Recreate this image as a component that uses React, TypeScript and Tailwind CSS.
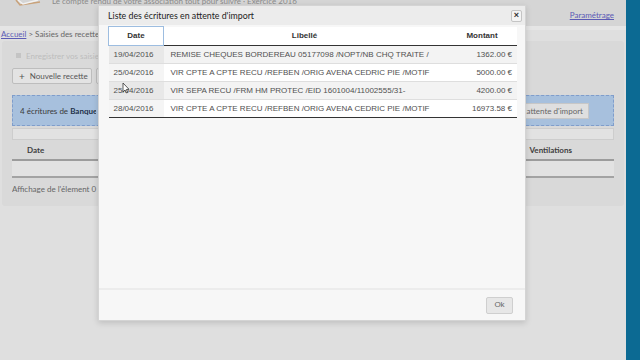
const rows = [
  { date: "19/04/2016", label: "REMISE CHEQUES BORDEREAU 05177098 /NOPT/NB CHQ TRAITE /", amount: "1362.00 €" },
  { date: "25/04/2016", label: "VIR CPTE A CPTE RECU /REFBEN /ORIG AVENA CEDRIC PIE /MOTIF", amount: "5000.00 €" },
  { date: "25/04/2016", label: "VIR SEPA RECU /FRM HM PROTEC /EID 1601004/11002555/31-", amount: "4200.00 €" },
  { date: "28/04/2016", label: "VIR CPTE A CPTE RECU /REFBEN /ORIG AVENA CEDRIC PIE /MOTIF", amount: "16973.58 €" },
];

function ImportModal() {
  return (
    <div className="absolute left-[98px] top-[5px] w-[428px] h-[316px] bg-[#f7f7f7] border border-[#d4d4d4] shadow-[0_2px_6px_rgba(0,0,0,0.15)] flex flex-col font-['Liberation_Sans',Arial,sans-serif]">
      {/* Titre */}
      <div className="h-[19px] bg-[#ececec] flex items-center pl-[9px] pr-[3px]">
        <span className="text-[8.8px] text-[#222] font-['Lato',sans-serif]">Liste des écritures en attente d'import</span>
        <button className="ml-auto w-[11px] h-[12px] border border-[#c4c4c4] bg-[#f4f4f4] rounded-[2px] flex items-center justify-center text-[9px] leading-none text-[#333] font-bold">
          ×
        </button>
      </div>

      {/* Tableau */}
      <div className="flex-1 pl-[9px] pt-[1px]">
        <table className="w-[409px] table-fixed border-collapse text-[8px] text-[#505050]">
          <colgroup>
            <col className="w-[55px]" />
            <col />
            <col className="w-[72px]" />
          </colgroup>
          <thead>
            <tr className="h-[19px] bg-white border-b border-[#333]">
              <th className="font-bold text-[#333] border border-[#9dbde0] text-center">Date</th>
              <th className="font-bold text-[#333] text-center">Libellé</th>
              <th className="font-bold text-[#333] text-center pl-[2px]">Montant</th>
            </tr>
          </thead>
          <tbody>
            {rows.map((r, i) => (
              <tr
                key={i}
                className={
                  "h-[18px] " +
                  (i % 2 === 0 ? "bg-[#f3f3f3] " : "bg-white ") +
                  (i === rows.length - 1 ? "border-b border-[#333]" : "border-b border-[#dedede]")
                }
              >
                <td className={"pl-[5px] whitespace-nowrap " + (i % 2 === 0 ? "bg-[#e8e8e8]" : "bg-[#f5f5f5]")}>{r.date}</td>
                <td className="pl-[7px] whitespace-nowrap overflow-hidden">{r.label}</td>
                <td className="pr-[5px] text-right whitespace-nowrap">{r.amount}</td>
              </tr>
            ))}
          </tbody>
        </table>
      </div>

      {/* Pied */}
      <div className="h-[32px] border-t-2 border-[#ececec] flex items-center justify-end pr-[12px]">
        <button className="w-[27px] h-[17px] bg-[#e7e7e7] border border-[#cfcfcf] rounded-[2px] text-[8px] text-[#666]">Ok</button>
      </div>

      {/* curseur souris */}
      <svg className="absolute left-[23px] top-[76px]" width="8" height="12" viewBox="0 0 8 12">
        <path d="M1 1 L1 10 L3 8 L4.6 11 L5.8 10.4 L4.3 7.5 L7 7.3 Z" fill="#fff" stroke="#333" strokeWidth="0.8" />
      </svg>
    </div>
  );
}

export default function App() {
  return (
    <div className="relative w-[640px] h-[360px] overflow-hidden bg-[#dfdfdf] flex font-['Lato',sans-serif] text-[#555]">
      <div className="flex-1 flex flex-col">
        {/* En-tête */}
        <div className="h-[26px] bg-[#d5d5d5] flex items-start shadow-[0_1px_2px_rgba(0,0,0,0.08)]">
          <svg className="ml-[14px]" width="28" height="7" viewBox="0 0 28 7">
            <path d="M2 0 L6 5 L26 2" fill="none" stroke="#c9a27a" strokeWidth="1.6" />
            <path d="M4 0 L9 4 L24 0" fill="none" stroke="#f2f2f2" strokeWidth="1.4" />
          </svg>
          <span className="ml-[10px] -mt-[5px] text-[8px] text-[#8a8a8a] whitespace-nowrap">
            Le compte rendu de votre association tout pour suivre · Exercice 2016
          </span>
          <a className="ml-auto mr-[12px] mt-[9px] text-[8px] text-[#5b5bb5] underline whitespace-nowrap">Paramétrage</a>
        </div>
        <div className="h-[4px] bg-[#e5e5e5]" />

        {/* Fil d'Ariane */}
        <div className="h-[10px] leading-[9px] text-[8px] pl-[1px] whitespace-nowrap">
          <a className="text-[#5b5bb5] underline">Accueil</a>
          <span className="text-[#666]"> &gt; Saisies des recettes</span>
        </div>

        {/* Panneau principal */}
        <div className="mx-[2px] mt-[1px] h-[165px] bg-[#d9d9d9] rounded-[3px] px-[10px] flex flex-col">
          <div className="mt-[7px] h-[15px] pl-[4px] flex items-center gap-[5px] text-[8px] text-[#bdbdbd]">
            <span className="w-[5px] h-[5px] bg-[#c4c4c4]" />
            <span>Enregistrer vos saisies</span>
          </div>

          <div className="mt-[5px] flex gap-[4px]">
            <button className="h-[16px] w-[80px] bg-[#e3e3e3] border border-[#bdbdbd] rounded-[2px] text-[8px] text-[#555] flex items-center gap-[5px] pl-[6px]">
              <span className="text-[10px] leading-none">+</span>
              <span>Nouvelle recette</span>
            </button>
            <button className="h-[16px] w-[90px] bg-[#e3e3e3] border border-[#bdbdbd] rounded-[2px]" />
          </div>

          <div className="mt-[11px] h-[31px] bg-[#a7c0dd] border border-dashed border-[#7f9dcb] flex items-center pl-[7px] pr-[24px]">
            <span className="w-[76px] overflow-hidden text-[8px] text-[#3a3a3a] whitespace-nowrap">
              4 écritures de <b className="text-[#23314a]">Banque</b> en attente d'import
            </span>
            <button className="ml-auto h-[16px] w-[64px] overflow-hidden bg-[#dfdfdf] border border-[#c7c7c7] text-[8px] text-[#666] whitespace-nowrap flex items-center justify-end pr-[5px]">
              attente d'import
            </button>
          </div>

          <div className="mt-[2px] h-[12px] bg-[#e2e2e2] border border-[#cdcdcd]" />

          <div className="h-[21px] flex items-center border-b-2 border-[#9c9c9c] text-[8px] font-bold text-[#3e3e3e]">
            <span className="pl-[15px]">Date</span>
            <span className="ml-auto mr-[42px]">Ventilations</span>
          </div>
          <div className="h-[17px] bg-[#e2e2e2] border-b-2 border-[#a3a3a3]" />

          <div className="mt-[5px] w-[86px] overflow-hidden text-[8px] text-[#666] whitespace-nowrap">Affichage de l'élement 0 à</div>
        </div>
      </div>

      <div className="w-[14px] bg-[#0c6a93]" />

      <ImportModal />
    </div>
  );
}
